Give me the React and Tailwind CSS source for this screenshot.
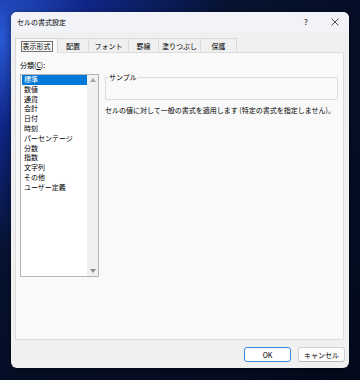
import React from "react";

const tabs = [
  { label: "表示形式", w: "w-[43px]" },
  { label: "配置", w: "w-[31px]" },
  { label: "フォント", w: "w-[40px]" },
  { label: "罫線", w: "w-[30px]" },
  { label: "塗りつぶし", w: "w-[42px]" },
  { label: "保護", w: "w-[36px]" },
];

const categories = [
  "標準",
  "数値",
  "通貨",
  "会計",
  "日付",
  "時刻",
  "パーセンテージ",
  "分数",
  "指数",
  "文字列",
  "その他",
  "ユーザー定義",
];

const App = () => {
  return (
    <div
      className="w-[360px] h-[380px] overflow-hidden pl-[11px] pt-[12px] bg-[radial-gradient(ellipse_at_0%_10%,#2a5ad8_0%,#10278a_18%,#071331_45%,#040a1c_100%)]"
      style={{ fontFamily: '"Noto Sans CJK JP", "Noto Sans", sans-serif' }}
    >
      <div className="flex flex-col w-[338px] h-[356px] bg-[#f0f0f0] rounded-[6px] overflow-hidden shadow-[0_2px_10px_rgba(0,0,0,0.5)] text-[7px] text-black">
        {/* title bar */}
        <div className="flex items-center h-[20px] pl-[6px] bg-[#f1f3f8]">
          <span className="flex-1 leading-[10px]">セルの書式設定</span>
          <span className="w-[12px] text-center text-[8px] leading-[10px]">?</span>
          <span className="flex items-center justify-center w-[12px] ml-[17px] mr-[8px]">
            <svg width="8" height="8" viewBox="0 0 8 8">
              <path d="M0.5 0.5 L7.5 7.5 M7.5 0.5 L0.5 7.5" stroke="#222" strokeWidth="0.8" />
            </svg>
          </span>
        </div>

        {/* tabs */}
        <div className="flex items-end h-[14px] mt-[6px] ml-[4px]">
          {tabs.map((t, i) =>
            i === 0 ? (
              <div
                key={t.label}
                className={`${t.w} h-[15px] -mb-[1px] flex items-center justify-center bg-[#f9f9f9] border border-b-0 border-[#d6d6d6] relative z-10`}
              >
                <span className="px-[1px] leading-[9px] border border-[#707070]">{t.label}</span>
              </div>
            ) : (
              <div
                key={t.label}
                className={`${t.w} h-[14px] flex items-center justify-center border-t border-r border-[#dadada] bg-[#f0f0f0] leading-[10px]`}
              >
                {t.label}
              </div>
            )
          )}
        </div>

        {/* panel */}
        <div className="flex gap-[6px] h-[288px] mx-[4px] mr-[5px] pt-[7px] pl-[4px] pr-[5px] bg-[#f9f9f9] border border-[#dcdcdc]">
          <div className="flex flex-col w-[79px]">
            <span className="leading-[10px]">
              分類(<span className="underline">C</span>):
            </span>
            <div className="flex h-[203px] mt-[4px] bg-white border border-[#b4b4b4]">
              <div className="flex-1 flex flex-col pt-[0px] pl-[1px]">
                {categories.map((c, i) => (
                  <div
                    key={c}
                    className={`h-[9.8px] leading-[9.8px] pl-[2px] ${
                      i === 0 ? "bg-[#0078d7] text-white" : ""
                    }`}
                  >
                    {c}
                  </div>
                ))}
              </div>
              <div className="flex flex-col justify-between items-center w-[11px] bg-[#f0f0f0] py-[3px]">
                <svg width="6" height="4" viewBox="0 0 6 4">
                  <path d="M0 4 L3 0 L6 4 Z" fill="#a3a3a3" />
                </svg>
                <svg width="6" height="4" viewBox="0 0 6 4">
                  <path d="M0 0 L6 0 L3 4 Z" fill="#8c8c8c" />
                </svg>
              </div>
            </div>
          </div>

          <div className="flex flex-col w-[233px] mt-[12px]">
            <fieldset className="h-[28px] border border-[#dcdcdc] rounded-[1px]">
              <legend className="ml-[2px] px-[1px] leading-[10px]">サンプル</legend>
            </fieldset>
            <p className="mt-[5px] leading-[10px] whitespace-nowrap">
              セルの値に対して一般の書式を適用します (特定の書式を指定しません)。
            </p>
          </div>
        </div>

        {/* buttons */}
        <div className="flex justify-end gap-[7px] mt-[7px] mr-[4px]">
          <button className="w-[47px] h-[15px] rounded-[3px] bg-white border border-[#3b86d6] leading-[10px]">
            OK
          </button>
          <button className="w-[47px] h-[15px] rounded-[3px] bg-[#fdfdfd] border border-[#d0d0d0] border-b-[#b8b8b8] leading-[10px]">
            キャンセル
          </button>
        </div>
      </div>
    </div>
  );
};

export default App;
